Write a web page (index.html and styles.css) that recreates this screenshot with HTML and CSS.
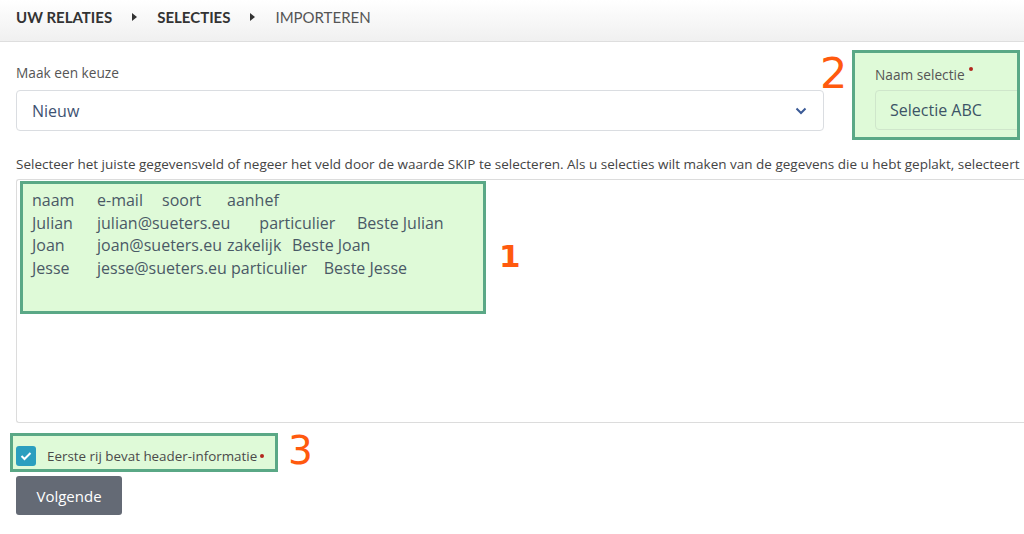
FILE: index.html
```html
<!DOCTYPE html>
<html lang="nl">
<head>
    <meta charset="UTF-8" />
    <title>Importeren</title>
    <link rel="stylesheet" href="styles.css">
</head>
<body>
    <header class="crumbs">
        <span class="crumb">UW RELATIES</span>
        <span class="sep"></span>
        <span class="crumb">SELECTIES</span>
        <span class="sep"></span>
        <span class="crumb current">IMPORTEREN</span>
    </header>

    <main class="form">
        <div class="top">
            <div class="field keuze">
                <label class="label">Maak een keuze</label>
                <div class="select">
                    <span>Nieuw</span>
                    <svg width="12" height="8" viewBox="0 0 12 8"><polyline points="1.5,1.5 6,6 10.5,1.5" fill="none" stroke="#3b5a96" stroke-width="2"/></svg>
                </div>
                <span class="mark mark-2">2</span>
            </div>
            <div class="hl field naam">
                <label class="label">Naam selectie<i class="req"></i></label>
                <div class="input">Selectie ABC</div>
            </div>
        </div>

        <p class="help">Selecteer het juiste gegevensveld of negeer het veld door de waarde SKIP te selecteren. Als u selecties wilt maken van de gegevens die u hebt geplakt, selecteert</p>

        <div class="textarea">
            <div class="hl paste"><pre>naam	e-mail	soort	aanhef
Julian	julian@sueters.eu       particulier	Beste Julian
Joan	joan@sueters.eu	zakelijk	Beste Joan
Jesse	jesse@sueters.eu particulier    Beste Jesse</pre></div>
            <span class="mark mark-1">1</span>
        </div>

        <div class="check-row">
            <label class="hl check">
                <span class="box"><svg width="12" height="10" viewBox="0 0 12 10"><polyline points="1.5,5 4.5,8 10.5,2" fill="none" stroke="#fff" stroke-width="2"/></svg></span>
                Eerste rij bevat header-informatie<i class="req"></i>
            </label>
            <span class="mark mark-3">3</span>
        </div>

        <button class="btn">Volgende</button>
    </main>
</body>
</html>
```

FILE: styles.css
```css
body {
    margin: 0;
    font-family: "Open Sans", sans-serif;
    color: #444;
    background: #fff;
    overflow: hidden;
}
.crumbs {
    height: 42px;
    box-sizing: border-box;
    padding: 7px 16px 0;
    display: flex;
    align-items: flex-start;
    gap: 20px;
    background: linear-gradient(#fff, #f0f0f0);
    border-bottom: 1px solid #dedede;
    font-family: Lato, sans-serif;
    font-size: 15px;
    line-height: 20px;
}
.crumb {
    font-weight: 700;
    color: #333;
}
.crumb.current {
    font-weight: 400;
    color: #555;
}
.sep {
    margin-top: 5.5px;
    width: 0;
    height: 0;
    border-top: 4.5px solid transparent;
    border-bottom: 4.5px solid transparent;
    border-left: 5px solid #333;
}
.form {
    padding: 0 0 0 16px;
}
.top {
    display: flex;
    align-items: flex-start;
}
.label {
    display: block;
    font-size: 13.7px;
    line-height: 18px;
    color: #555;
}
.req {
    display: inline-block;
    width: 4px;
    height: 4px;
    border-radius: 50%;
    background: #b3261e;
    margin-left: 4px;
    vertical-align: 9px;
}
.keuze {
    position: relative;
    flex-shrink: 0;
    width: 808px;
    margin-top: 22px;
}
.select {
    margin-top: 8px;
    height: 39px;
    border: 1px solid #dadde1;
    border-radius: 4px;
    display: flex;
    align-items: center;
    justify-content: space-between;
    padding: 0 16px 0 15px;
    font-size: 16px;
    color: #3e5272;
}
.hl {
    background: #dffad8;
    border: 3px solid #5aa886;
    box-sizing: border-box;
}
.naam {
    flex-shrink: 0;
    margin: 8px 0 0 28px;
    width: 168px;
    height: 90px;
    padding: 13px 0 0 20px;
    overflow: hidden;
}
.input {
    margin-top: 6px;
    width: 160px;
    height: 40px;
    box-sizing: border-box;
    border: 1px solid #cfe6cb;
    border-radius: 4px;
    padding: 0 14px;
    display: flex;
    align-items: center;
    font-size: 16px;
    color: #3c5466;
}
.mark {
    position: absolute;
    font-family: "DejaVu Sans", sans-serif;
    line-height: 1;
    color: #ff5a0e;
}
.mark-2 {
    left: 804px;
    top: -12px;
    font-size: 43px;
}
.mark-1 {
    left: 482px;
    top: 61px;
    font-weight: 700;
    font-size: 31px;
}
.mark-3 {
    left: 278px;
    top: -2px;
    font-size: 39px;
}
.help {
    margin: 15px 0 0;
    font-size: 13.5px;
    line-height: 18px;
    white-space: nowrap;
}
.textarea {
    position: relative;
    margin-top: 6px;
    height: 244px;
    box-sizing: border-box;
    border: 1px solid #dcdcdc;
    border-right: none;
    border-radius: 3px 0 0 3px;
    padding: 1px 3px;
}
.paste {
    width: 466px;
    height: 133px;
    padding: 5px 0 0 9px;
}
.paste pre {
    margin: 0;
    font-family: "Open Sans", sans-serif;
    font-size: 16px;
    line-height: 22.5px;
    color: #4a5966;
    tab-size: 65px;
}
.check-row {
    position: relative;
    margin: 10px 0 0 -6px;
}
.check {
    width: 268px;
    height: 39px;
    display: flex;
    align-items: center;
    padding: 6px 0 0 3px;
    font-size: 13.4px;
    color: #4a4a4a;
}
.box {
    width: 20px;
    height: 20px;
    border-radius: 3px;
    background: #2b9fbf;
    display: flex;
    align-items: center;
    justify-content: center;
    margin-right: 11px;
}
.check .req {
    margin-left: 3px;
}
.btn {
    margin-top: 4px;
    width: 106px;
    height: 39px;
    border: none;
    border-radius: 3px;
    background: #646a75;
    color: #fff;
    font-family: "Open Sans", sans-serif;
    font-size: 15px;
}
```
